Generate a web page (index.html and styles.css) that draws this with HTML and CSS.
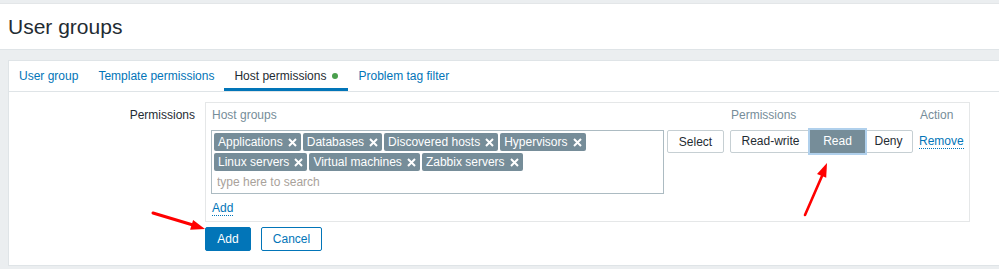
FILE: index.html
```html
<!DOCTYPE html>
<html lang="en">
<head>
  <meta charset="UTF-8">
  <meta name="viewport" content="width=device-width, initial-scale=1.0">
  <title>User groups</title>
  <link rel="stylesheet" href="styles.css">
</head>
<body>
  <header class="page-header">
    <h1>User groups</h1>
  </header>

  <main class="wrapper">
    <div class="panel">
      <ul class="tabs">
        <li><a href="#">User group</a></li>
        <li><a href="#">Template permissions</a></li>
        <li class="active"><a href="#">Host permissions<span class="dot"></span></a></li>
        <li><a href="#">Problem tag filter</a></li>
      </ul>

      <form class="form">
        <div class="form-row">
          <label class="form-label">Permissions</label>
          <div class="perm-table">
            <div class="th">Host groups</div>
            <div class="th"></div>
            <div class="th">Permissions</div>
            <div class="th">Action</div>

            <div class="multiselect">
              <ul class="tags">
                <li class="tag">Applications<svg class="x" viewBox="0 0 9 9"><path d="M1 1L8 8M8 1L1 8"/></svg></li>
                <li class="tag">Databases<svg class="x" viewBox="0 0 9 9"><path d="M1 1L8 8M8 1L1 8"/></svg></li>
                <li class="tag">Discovered hosts<svg class="x" viewBox="0 0 9 9"><path d="M1 1L8 8M8 1L1 8"/></svg></li>
                <li class="tag">Hypervisors<svg class="x" viewBox="0 0 9 9"><path d="M1 1L8 8M8 1L1 8"/></svg></li>
                <li class="tag">Linux servers<svg class="x" viewBox="0 0 9 9"><path d="M1 1L8 8M8 1L1 8"/></svg></li>
                <li class="tag">Virtual machines<svg class="x" viewBox="0 0 9 9"><path d="M1 1L8 8M8 1L1 8"/></svg></li>
                <li class="tag">Zabbix servers<svg class="x" viewBox="0 0 9 9"><path d="M1 1L8 8M8 1L1 8"/></svg></li>
              </ul>
              <input type="text" class="ms-input" placeholder="type here to search">
            </div>
            <div><button type="button" class="btn-alt">Select</button></div>
            <ul class="radio-seg">
              <li class="rw">Read-write</li>
              <li class="rd checked">Read</li>
              <li class="dn">Deny</li>
            </ul>
            <div class="action-cell"><a href="#" class="link-dotted">Remove</a></div>

            <div class="add-row"><a href="#" class="link-dotted">Add</a></div>
          </div>
        </div>

        <div class="form-actions">
          <button type="button" class="btn">Add</button>
          <button type="button" class="btn-outline">Cancel</button>
        </div>
      </form>
    </div>
  </main>

  <!-- annotation arrows -->
  <svg class="annotations" width="999" height="269" viewBox="0 0 999 269">
    <line x1="153" y1="213" x2="193" y2="225" stroke="#ff0000" stroke-width="3" stroke-linecap="round"/>
    <polygon points="205,229 190.1,229.7 193.1,220.1" fill="#ff0000"/>
    <line x1="805" y1="215" x2="822" y2="176" stroke="#ff0000" stroke-width="2.6" stroke-linecap="round"/>
    <polygon points="827,163 826.2,177.8 817,174" fill="#ff0000"/>
  </svg>
</body>
</html>
```

FILE: styles.css
```css
* {
  margin: 0;
  padding: 0;
  box-sizing: border-box;
}

body {
  font-family: 'Liberation Sans', Arial, sans-serif;
  font-size: 12px;
  color: #1f2c33;
  background: #ebeef0;
  width: 999px;
  height: 269px;
  overflow: hidden;
  position: relative;
}

a {
  color: #0275b8;
  text-decoration: none;
}

/* Header */
.page-header {
  margin-top: 3px;
  border-top: 1px solid #e3e6e8;
  background: #ffffff;
  padding: 11px 8px 10px;
}

.page-header h1 {
  font-size: 21px;
  font-weight: normal;
  line-height: 24px;
}

.wrapper {
  border-top: 1px solid #dfe4e7;
  padding: 10px 0 0 8px;
}

.panel {
  background: #ffffff;
  border: 1px solid #dfe4e7;
  border-right: none;
  padding-bottom: 14px;
}

/* Tabs */
.tabs {
  list-style: none;
  display: flex;
  border-bottom: 1px solid #dfe4e7;
}

.tabs li a {
  display: block;
  line-height: 30px;
  padding: 0 10px;
}

.tabs li.active a {
  color: #1f2c33;
  box-shadow: inset 0 -3px 0 #0275b8;
}

.dot {
  display: inline-block;
  width: 6px;
  height: 6px;
  border-radius: 50%;
  background: #4a9f4d;
  margin-left: 6px;
  vertical-align: 1px;
}

/* Form */
.form {
  padding-top: 10px;
}

.form-row {
  display: flex;
}

.form-label {
  width: 196px;
  padding: 6px 10px 0 0;
  text-align: right;
  line-height: 14px;
}

.perm-table {
  width: 765px;
  border: 1px solid #e5e7e8;
  padding: 0 5px;
  display: grid;
  grid-template-columns: 456px 63px 189px auto;
  align-items: start;
}

.th {
  color: #768d99;
  line-height: 14px;
  padding: 5px 0 8px 1px;
}

.multiselect {
  width: 453px;
  border: 1px solid #acbbc2;
  padding: 0 0 1px 2px;
}

.tags {
  list-style: none;
  display: flex;
  flex-wrap: wrap;
}

.tag {
  display: flex;
  align-items: center;
  background: #768d99;
  color: #ffffff;
  border-radius: 2px;
  height: 18px;
  padding: 0 4px;
  margin: 2px 2px 0 0;
  white-space: nowrap;
}

.tag .x {
  width: 9px;
  height: 9px;
  margin-left: 5px;
  stroke: #ffffff;
  stroke-width: 2;
  fill: none;
}

.ms-input {
  display: block;
  width: 100%;
  border: none;
  outline: none;
  height: 20px;
  padding: 0 3px;
  margin-top: 1px;
  font-family: inherit;
  font-size: 12px;
  color: #1f2c33;
}

.ms-input::placeholder {
  color: #a9a29b;
}

.btn-alt {
  width: 57px;
  height: 23px;
  background: #ffffff;
  border: 1px solid #c6cfd3;
  border-radius: 2px;
  font-family: inherit;
  font-size: 12px;
  color: #1f2c33;
}

.radio-seg {
  list-style: none;
  display: flex;
}

.radio-seg li {
  height: 23px;
  line-height: 21px;
  border: 1px solid #c6cfd3;
  text-align: center;
  background: #ffffff;
}

.radio-seg li + li {
  margin-left: -1px;
}

.radio-seg .rw {
  width: 81px;
  border-radius: 2px 0 0 2px;
}

.radio-seg .rd {
  width: 55px;
}

.radio-seg .dn {
  width: 49px;
  border-radius: 0 2px 2px 0;
}

.radio-seg .checked {
  position: relative;
  z-index: 1;
  background: #768d99;
  border-color: #768d99;
  color: #ffffff;
  box-shadow: 0 0 0 2px #b0d0ec;
}

.action-cell {
  line-height: 23px;
}

.link-dotted {
  border-bottom: 1px dotted #0275b8;
}

.add-row {
  grid-column: 1 / -1;
  line-height: 14px;
  padding: 7px 0 6px 1px;
}

.form-actions {
  display: flex;
  gap: 10px;
  margin: 5px 0 0 196px;
}

.btn,
.btn-outline {
  height: 24px;
  border-radius: 2px;
  font-family: inherit;
  font-size: 12px;
  border: 1px solid #0275b8;
}

.btn {
  width: 46px;
  background: #0275b8;
  color: #ffffff;
}

.btn-outline {
  width: 61px;
  background: #ffffff;
  color: #0275b8;
}

.annotations {
  position: absolute;
  top: 0;
  left: 0;
  pointer-events: none;
}
```
